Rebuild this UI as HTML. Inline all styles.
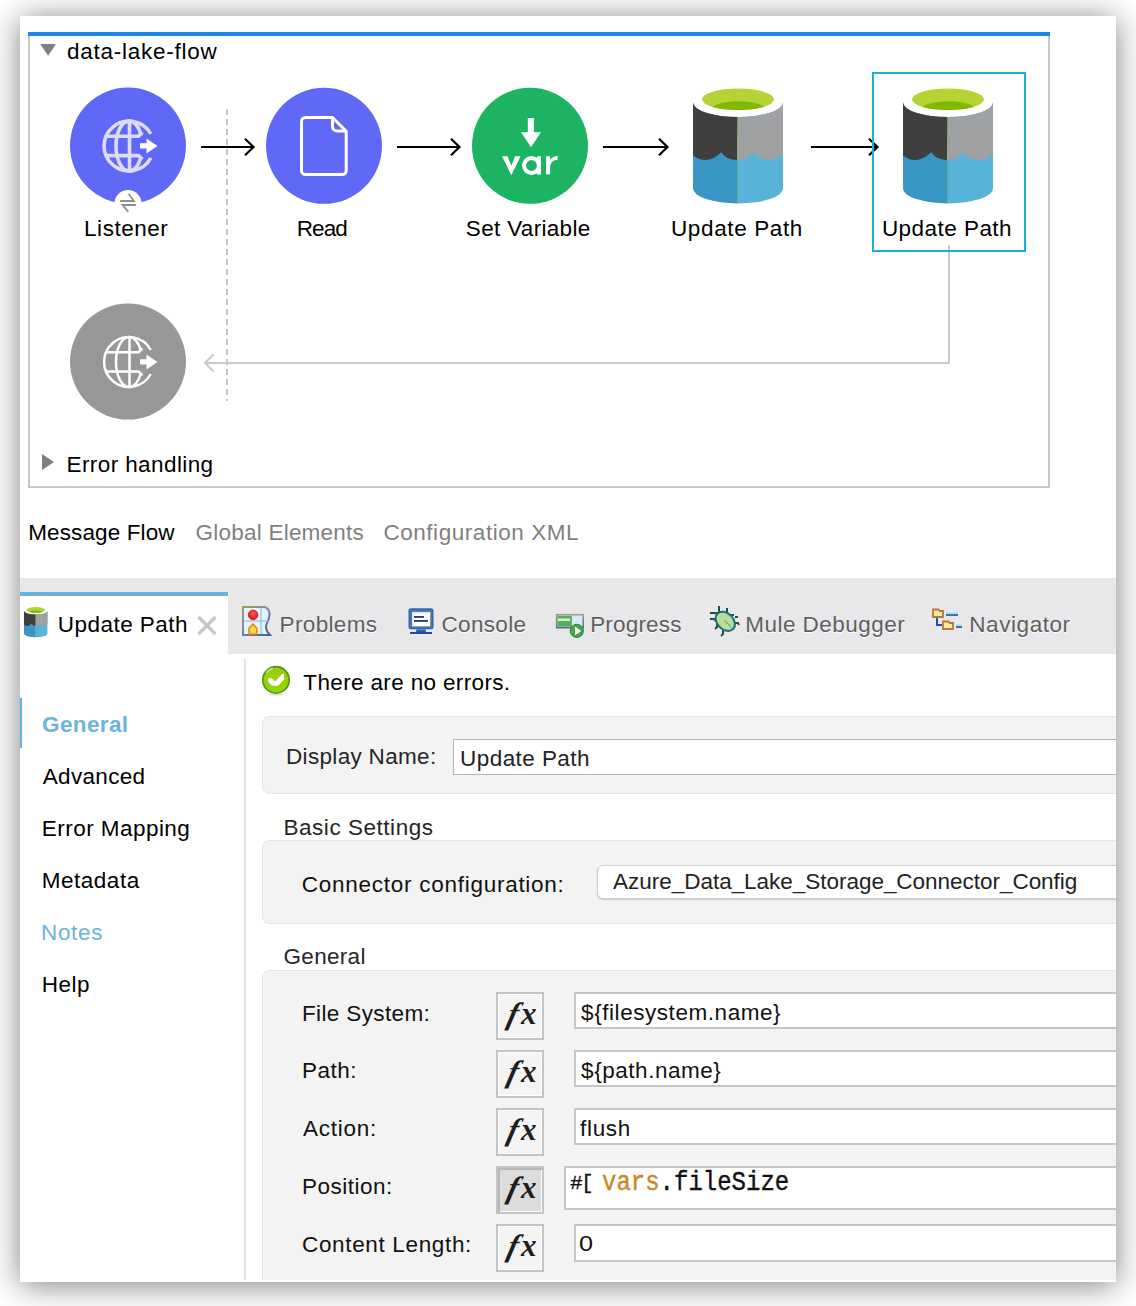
<!DOCTYPE html>
<html><head><meta charset="utf-8">
<style>
html,body{margin:0;padding:0;background:#fff;}
body{width:1136px;height:1306px;position:relative;overflow:hidden;font-family:"Liberation Sans",sans-serif;}
#win{position:absolute;left:20px;top:16px;width:1096px;height:1266px;background:#fff;box-shadow:0 3px 30px rgba(0,0,0,0.5);overflow:hidden;}
#c{position:absolute;left:-20px;top:-16px;width:1136px;height:1306px;}
.a{position:absolute;}
.t{position:absolute;white-space:nowrap;font-size:22.5px;line-height:22px;color:#000;}
svg{position:absolute;overflow:visible;}
.mono{font-family:"Liberation Mono",monospace;color:#111;transform:scaleY(1.15);transform-origin:0 17px;-webkit-text-stroke:0.35px #111;}
.tb{color:#5f5f60;text-shadow:0 1px 0 #fff;}
.fx{position:absolute;left:496px;width:48px;height:48px;box-sizing:border-box;border:2px solid #c4c4c4;background:#f4f4f4;box-shadow:inset 0 0 0 1px #fff;}
.fx i{position:absolute;top:4.5px;font-family:"Liberation Serif",serif;font-style:italic;font-weight:bold;line-height:30px;color:#1e1e1e;}
.fx .ff{left:8px;font-size:31px;transform:skewX(-14deg);transform-origin:0 24px;}
.fx .fxx{left:23px;font-size:31px;}
.fx.pressed{background:#dcdcdc;box-shadow:inset 2px 2px 0 #b8b8b8, inset -1px -1px 0 #fff;}
.inp{position:absolute;left:574px;width:700px;box-sizing:border-box;border:2px solid #c6c6c6;background:#fff;}
</style></head><body>
<div id="win"><div id="c">
  <!-- flow container -->
  <div class="a" style="left:28px;top:32px;width:1022px;height:4px;background:#1a88e6"></div>
  <div class="a" style="left:28px;top:36px;width:2px;height:452px;background:#c8c8cc"></div>
  <div class="a" style="left:1048px;top:36px;width:2px;height:452px;background:#c8c8cc"></div>
  <div class="a" style="left:28px;top:486px;width:1022px;height:2px;background:#c8c8cc"></div>

  <!-- DIAGRAM -->
    <svg class="a" style="left:0;top:0" width="1136" height="500" viewBox="0 0 1136 500">
    <defs>
      <clipPath id="cyl">
        <path d="M8,22.5 L8,108.5 A45,15 0 0 0 98,108.5 L98,22.5 A45,14.5 0 0 1 8,22.5 Z"/>
      </clipPath>
      <clipPath id="grn"><ellipse cx="53" cy="19.3" rx="36" ry="10.8"/></clipPath>
      <g id="lake">
        <g clip-path="url(#cyl)">
          <rect x="0" y="0" width="53" height="130" fill="#3a96c5"/>
          <rect x="53" y="0" width="60" height="130" fill="#59b3d9"/>
          <path d="M0,0 H53 V80 Q42,80.5 36.3,72.2 Q20,88 4,72 L0,72 Z" fill="#3f3f40"/>
          <path d="M53,0 H110 V72 H100 Q84,88 68.2,72.4 Q62.5,80.5 52,80 Z" fill="#a0a1a3"/>
          <rect x="52.3" y="36" width="0.8" height="90" fill="#8cc06a" opacity="0.7"/>
        </g>
        <ellipse cx="53" cy="19.3" rx="36" ry="10.8" fill="#b5d335"/>
        <g clip-path="url(#grn)"><ellipse cx="53.5" cy="30.5" rx="28.5" ry="9.3" fill="#7fba00"/></g>
      </g>
    </defs>

    <!-- header -->
    <path d="M40.2,44 L56,44 L48.1,55.7 Z" fill="#7f7f7f"/>
    <!-- error handling triangle -->
    <path d="M42,454 L54,462 L42,470 Z" fill="#7f7f7f"/>

    <!-- dashed line -->
    <line x1="227" y1="109" x2="227" y2="401" stroke="#c8c8c8" stroke-width="2" stroke-dasharray="6 4"/>

    <!-- return path -->
    <polyline points="949,245 949,363 205,363" fill="none" stroke="#c9c9c9" stroke-width="2"/>
    <polyline points="213.5,354.5 205,363 213.5,371.5" fill="none" stroke="#c9c9c9" stroke-width="2"/>

    <!-- arrows -->
    <g stroke="#000" stroke-width="2.2" fill="none">
      <line x1="201" y1="147" x2="253" y2="147"/><polyline points="245,138.8 253.5,147 245,155.2"/>
      <line x1="397" y1="147" x2="459" y2="147"/><polyline points="451,138.8 459.5,147 451,155.2"/>
      <line x1="603" y1="147" x2="667" y2="147"/><polyline points="659,138.8 667.5,147 659,155.2"/>
      <line x1="811" y1="147" x2="877" y2="147"/><polyline points="869,138.8 877.5,147 869,155.2"/>
    </g>

    <!-- Listener -->
    <circle cx="128" cy="145.6" r="58" fill="#6068f7"/>
    <g stroke="#dcdcf8" stroke-width="3.6" fill="none">
      <path d="M150.8,134 A24.9,24.9 0 1 0 150.8,158"/>
      <path d="M129,121.1 A13,24.9 0 0 0 129,170.9"/>
      <path d="M129,121.1 A13,24.9 0 0 1 141,135"/>
      <path d="M141,157 A13,24.9 0 0 1 129,170.9"/>
      <line x1="129.5" y1="121" x2="129.5" y2="171"/>
      <path d="M105,136.2 H138.5 L142.5,132.5"/>
      <path d="M105,155.6 H138.5 L142.5,159.3"/>
    </g>
    <path d="M140,143.3 H146.5 V138.5 L157.5,146 L146.5,153.5 V148.6 H140 Z" fill="#fff"/>
    <circle cx="128" cy="203.6" r="13.6" fill="#fff"/>
    <g stroke="#8f8f8f" stroke-width="1.8" fill="none">
      <polyline points="120.1,201 134,201 128.6,194"/>
      <polyline points="135.8,205 122.6,205 128.3,211.8"/>
    </g>


    <!-- gray globe -->
    <circle cx="128" cy="361.6" r="58" fill="#979797"/>
    <g transform="translate(0,216)">
    <g stroke="#fff" stroke-width="2.5" fill="none">
      <path d="M150.8,134 A24.9,24.9 0 1 0 150.8,158"/>
      <path d="M129,121.1 A13,24.9 0 0 0 129,170.9"/>
      <path d="M129,121.1 A13,24.9 0 0 1 141,135"/>
      <path d="M141,157 A13,24.9 0 0 1 129,170.9"/>
      <line x1="129.5" y1="121" x2="129.5" y2="171"/>
      <path d="M105,136.2 H138.5 L142.5,132.5"/>
      <path d="M105,155.6 H138.5 L142.5,159.3"/>
    </g>
    <path d="M140,143.3 H146.5 V138.5 L157.5,146 L146.5,153.5 V148.6 H140 Z" fill="#fff"/>
    </g>
    <!-- Read -->
    <circle cx="324" cy="145.8" r="58" fill="#6068f7"/>
    <path d="M305.5,117.5 H332.5 L346.2,131.2 V170.5 A4,4 0 0 1 342.2,174.5 H305.5 A4,4 0 0 1 301.5,170.5 V121.5 A4,4 0 0 1 305.5,117.5 Z" fill="none" stroke="#fff" stroke-width="3" stroke-linejoin="round"/>
    <path d="M332.5,117.5 V126.5 A4.5,4.5 0 0 0 337,131 H346.2" fill="none" stroke="#fff" stroke-width="3"/>

    <!-- Set Variable -->
    <circle cx="530" cy="145.8" r="58" fill="#1cb363"/>
    <rect x="527.8" y="118" width="6.1" height="15" fill="#fff"/>
    <path d="M521,132.3 H541 L531,147.2 Z" fill="#fff"/>
    <path d="M502.1,156.2 H507.6 L511.3,165.8 L515.1,156.2 H520.6 L511.3,175.3 Z" fill="#fff"/>
    <circle cx="531.5" cy="165.5" r="7.4" fill="none" stroke="#fff" stroke-width="4"/>
    <rect x="537" y="156.3" width="4" height="18.3" fill="#fff"/>
    <rect x="546.1" y="156.3" width="4" height="18.1" fill="#fff"/>
    <path d="M549,163.5 Q550,155.9 558,156 L557.3,160.1 Q551.6,160 550.1,166 Z" fill="#fff"/>

    <!-- Update Path 1 & 2 -->
    <use href="#lake" x="685" y="80"/>
    <use href="#lake" x="895" y="80"/>

    <!-- selection box -->
    <rect x="873" y="73" width="152" height="178" fill="none" stroke="#15b2d6" stroke-width="2"/>
  </svg>


  <!-- editor tabs -->
    <!-- editor tabs -->


  <!-- tab bar -->
  <div class="a" style="left:20px;top:578px;width:1096px;height:76px;background:#e8e8ea"></div>
  <div class="a" style="left:20px;top:592px;width:208px;height:62px;background:#fff"></div>
  <div class="a" style="left:20px;top:592px;width:208px;height:4px;background:#62b4e0"></div>
    <svg class="a" style="left:0;top:0" width="1136" height="700" viewBox="0 0 1136 700">
    <!-- active tab small lake -->
    <use href="#lake" transform="translate(21.8,604.8) scale(0.264)"/>
    <!-- close X -->
    <g stroke="#c6c6c6" stroke-width="3.2" stroke-linecap="butt">
      <line x1="198.5" y1="617" x2="215.5" y2="634"/><line x1="215.5" y1="617" x2="198.5" y2="634"/>
    </g>
    <!-- Problems icon -->
    <defs>
      <linearGradient id="pbord" x1="0" y1="0" x2="0.7" y2="1"><stop offset="0" stop-color="#a39a55"/><stop offset="0.45" stop-color="#8090a8"/><stop offset="1" stop-color="#4d6590"/></linearGradient>
      <radialGradient id="redg" cx="0.5" cy="0.35" r="0.6"><stop offset="0" stop-color="#ff5a5a"/><stop offset="1" stop-color="#d01818"/></radialGradient>
      <linearGradient id="chk" x1="0" y1="0" x2="0" y2="1"><stop offset="0" stop-color="#a8dc3c"/><stop offset="1" stop-color="#58a818"/></linearGradient>
    </defs>
    <path d="M243,607 H264.5 Q269.5,608.5 269.5,614 Q269.5,619 267,623 Q264,629 270,635 H243 Z" fill="#e4f2fb" stroke="url(#pbord)" stroke-width="2"/>
    <line x1="261" y1="608" x2="261" y2="634" stroke="#a9c0e2" stroke-width="1.4"/>
    <line x1="244" y1="621" x2="268" y2="621" stroke="#a9c0e2" stroke-width="1.4"/>
    <circle cx="253.1" cy="614.9" r="4.8" fill="url(#redg)" stroke="#d01010" stroke-width="0.8"/>
    <path d="M249,634 V628.2 L252.8,624.2 L256.8,628.2 V634 Z" fill="#ffd84a" stroke="#e88a10" stroke-width="1.6"/>
    <!-- Console icon -->
    <rect x="408.5" y="608.3" width="25" height="21" rx="2.5" fill="#2a68bc"/>
    <rect x="410.3" y="610.2" width="21.5" height="17.5" fill="#6a7591"/>
    <rect x="412" y="612" width="18.2" height="14.3" fill="#fff"/>
    <rect x="412" y="612" width="18.2" height="1.6" fill="#c8f0ff"/>
    <rect x="412" y="612" width="1.6" height="14.3" fill="#c8f0ff"/>
    <rect x="414" y="616" width="10" height="1.9" fill="#2d3c82"/>
    <rect x="414" y="620" width="14" height="1.9" fill="#2d3c82"/>
    <rect x="416.2" y="629.5" width="9.6" height="2.8" fill="#2d5c9c"/>
    <rect x="410" y="632" width="22" height="2" fill="#1f4f94"/>
    <!-- Progress icon -->
    <defs><linearGradient id="prb" x1="0" y1="0" x2="0" y2="1"><stop offset="0" stop-color="#aa9c88"/><stop offset="1" stop-color="#566c92"/></linearGradient></defs>
    <rect x="556.7" y="614.7" width="26.5" height="13" fill="#d2ecf8" stroke="url(#prb)" stroke-width="1.6"/>
    <rect x="557.6" y="615.8" width="14.3" height="10.9" fill="#5aae58"/>
    <rect x="558" y="618.5" width="12" height="2.4" fill="#eaf6e6" opacity="0.9"/>
    <circle cx="576.8" cy="630.9" r="6.6" fill="#4ba34c" stroke="#248a38" stroke-width="1"/>
    <path d="M575,626.6 L581.2,631 L575,635.2 Z" fill="#fff"/>
    <!-- Bug icon -->
    <g stroke="#234f3c" stroke-width="2" fill="none">
      <polyline points="719,606 719,613"/>
      <polyline points="710,613 720,613"/>
      <polyline points="727,608 727,614 725,616"/>
      <polyline points="730,615 734,615"/>
      <polyline points="735,617 738,617"/>
      <polyline points="710,619 714,619 716,621"/>
      <polyline points="717,621 717,627 715,629"/>
      <polyline points="734,623 738,623 739,625"/>
      <polyline points="723,628 723,634 721,636"/>
    </g>
    <ellipse cx="725.3" cy="621.3" rx="11" ry="8" transform="rotate(45 725.3 621.3)" fill="#b9dca0" stroke="#1e6e80" stroke-width="2"/>
    <line x1="725" y1="621" x2="731" y2="627" stroke="#58a040" stroke-width="1.4" stroke-dasharray="1.5 1"/>
    <!-- Navigator icon -->
    <g stroke="#b27a3a" stroke-width="1.8" fill="#f9e8a2">
      <path d="M933,609.5 H938.5 L939.8,611 H943 V617 H933 Z"/>
      <path d="M943,621.5 H948.5 L949.8,623 H953 V629 H943 Z"/>
    </g>
    <rect x="946" y="612" width="12" height="2" fill="#a2e8ff"/><rect x="946" y="614" width="12" height="2" fill="#4a6ea8"/>
    <rect x="956" y="624" width="6" height="2" fill="#a2e8ff"/><rect x="956" y="626" width="6" height="2" fill="#4a6ea8"/>
    <path d="M937,618 V625 H942" fill="none" stroke="#2050a8" stroke-width="2"/>
  </svg>


  <!-- left nav divider -->
  <div class="a" style="left:244px;top:659px;width:2px;height:640px;background:#e2e2e6"></div>
  <div class="a" style="left:20px;top:698px;width:2px;height:50px;background:#62b4e0"></div>


  <!-- panels -->
  <div class="a" style="left:262px;top:716px;width:900px;height:78px;background:#f3f3f3;border:1px solid #e6e6e6;border-radius:7px;box-sizing:border-box"></div>
  <div class="a" style="left:262px;top:840px;width:900px;height:84px;background:#f3f3f3;border:1px solid #e6e6e6;border-radius:7px;box-sizing:border-box"></div>
  <div class="a" style="left:262px;top:970px;width:900px;height:400px;background:#f3f3f3;border:1px solid #e6e6e6;border-radius:7px;box-sizing:border-box"></div>
    <svg class="a" style="left:0;top:0" width="1136" height="1306" viewBox="0 0 1136 1306">
    <ellipse cx="276" cy="694.3" rx="8" ry="1.3" fill="#000" opacity="0.13"/>
    <circle cx="276" cy="679.9" r="13.2" fill="url(#chk2)" stroke="#4f9812" stroke-width="1.7"/>
    <defs><linearGradient id="chk2" x1="0" y1="0" x2="0" y2="1"><stop offset="0" stop-color="#9ccc10"/><stop offset="1" stop-color="#92d600"/></linearGradient></defs>
    <path d="M266.5,673 Q268.5,669 273,668.2" fill="none" stroke="#d8f0a0" stroke-width="1.6" opacity="0.8"/>
    <polygon points="268.1,678.2 271.9,678.2 275,681.6 282.1,674 284,674 284,679.7 278,685.8 271.9,685.8 268.1,681.6" fill="#fff"/>
  </svg>

  <div class="a" style="left:453px;top:739px;width:700px;height:36px;background:#fff;border:1px solid #b2b2b2;box-sizing:border-box"></div>

  <div class="a" style="left:597px;top:865px;width:600px;height:34px;background:#fff;border:1px solid #cfcfcf;border-radius:6px;box-shadow:0 1px 1.5px rgba(0,0,0,0.18);box-sizing:border-box"></div>



  <div class="fx" style="top:992px"><i class="ff">f</i><i class="fxx">x</i></div>
  <div class="fx" style="top:1050px"><i class="ff">f</i><i class="fxx">x</i></div>
  <div class="fx" style="top:1108px"><i class="ff">f</i><i class="fxx">x</i></div>
  <div class="fx pressed" style="top:1166px"><i class="ff">f</i><i class="fxx">x</i></div>
  <div class="fx" style="top:1224px"><i class="ff">f</i><i class="fxx">x</i></div>

  <div class="inp" style="top:992px;height:37px"></div>
  <div class="inp" style="top:1050px;height:37px"></div>
  <div class="inp" style="top:1108px;height:37px"></div>
  <div class="inp" style="left:564px;top:1166px;height:44px"></div>
  <div class="inp" style="top:1224px;height:38px"></div>

  <div class="t mono" style="left:570px;top:1173px;font-size:21px;transform:none;letter-spacing:-1.5px">#[</div>
  <div class="t mono" style="left:602px;top:1173px;font-size:24px;color:#c88a1c;-webkit-text-stroke:0.35px #c88a1c">vars<span style="color:#111;-webkit-text-stroke:0.35px #111">.fileSize</span></div>
  <div class="t" style="left:579px;top:1233px;color:#111;transform:scaleX(1.12);transform-origin:0 0">0</div>


<!--TEXT-->
<div class="t" style="left:67px;top:41.4px;letter-spacing:0.738px">data-lake-flow</div>
<div class="t" style="left:84.1px;top:217.9px;letter-spacing:0.514px">Listener</div>
<div class="t" style="left:296.7px;top:217.9px;letter-spacing:-0.9px">Read</div>
<div class="t" style="left:465.8px;top:217.9px;letter-spacing:0.327px">Set Variable</div>
<div class="t" style="left:671px;top:217.9px;letter-spacing:0.62px">Update Path</div>
<div class="t" style="left:881.9px;top:217.9px;letter-spacing:0.46px">Update Path</div>
<div class="t" style="left:66.5px;top:453.9px;letter-spacing:0.408px">Error handling</div>
<div class="t" style="left:28.2px;top:521.6px;letter-spacing:0.118px">Message Flow</div>
<div class="t" style="left:195.6px;top:521.6px;letter-spacing:0.221px;color:#7f7f7f">Global Elements</div>
<div class="t" style="left:383.4px;top:521.6px;letter-spacing:0.55px;color:#7f7f7f">Configuration XML</div>
<div class="t" style="left:57.7px;top:614.3px;letter-spacing:0.48px">Update Path</div>
<div class="t tb" style="left:279.6px;top:614px;letter-spacing:0.343px;color:#5f5f60">Problems</div>
<div class="t tb" style="left:441.5px;top:614px;letter-spacing:0.333px;color:#5f5f60">Console</div>
<div class="t tb" style="left:590.2px;top:614px;letter-spacing:0.171px;color:#5f5f60">Progress</div>
<div class="t tb" style="left:745.2px;top:614px;letter-spacing:0.483px;color:#5f5f60">Mule Debugger</div>
<div class="t tb" style="left:969.3px;top:614px;letter-spacing:0.562px;color:#5f5f60">Navigator</div>
<div class="t" style="left:42px;top:713.9px;letter-spacing:0.383px;font-weight:bold;color:#6cb3de">General</div>
<div class="t" style="left:42.8px;top:765.9px;letter-spacing:0.314px">Advanced</div>
<div class="t" style="left:41.8px;top:818.1px;letter-spacing:0.458px">Error Mapping</div>
<div class="t" style="left:41.7px;top:870px;letter-spacing:0.529px">Metadata</div>
<div class="t" style="left:41px;top:922px;letter-spacing:0.65px;color:#6cb3de">Notes</div>
<div class="t" style="left:41.7px;top:974px;letter-spacing:0.5px">Help</div>
<div class="t" style="left:303.3px;top:672px;letter-spacing:0.353px">There are no errors.</div>
<div class="t" style="left:286px;top:746.4px;letter-spacing:0.325px;color:#262626">Display Name:</div>
<div class="t" style="left:460.1px;top:748.1px;letter-spacing:0.43px;color:#222">Update Path</div>
<div class="t" style="left:283.5px;top:816.5px;letter-spacing:0.531px;color:#262626">Basic Settings</div>
<div class="t" style="left:301.8px;top:873.9px;letter-spacing:0.735px;color:#111">Connector configuration:</div>
<div class="t" style="left:613.1px;top:871.3px;letter-spacing:-0.028px;color:#222">Azure_Data_Lake_Storage_Connector_Config</div>
<div class="t" style="left:283.5px;top:946px;letter-spacing:0.317px;color:#262626">General</div>
<div class="t" style="left:302px;top:1002.5px;letter-spacing:0.364px;color:#111">File System:</div>
<div class="t" style="left:302px;top:1060px;letter-spacing:0.5px;color:#111">Path:</div>
<div class="t" style="left:303px;top:1118px;letter-spacing:0.733px;color:#111">Action:</div>
<div class="t" style="left:302px;top:1176px;letter-spacing:0.5px;color:#111">Position:</div>
<div class="t" style="left:302px;top:1234px;letter-spacing:0.657px;color:#111">Content Length:</div>
<div class="t" style="left:581.1px;top:1001.6px;letter-spacing:0.553px;color:#111">${filesystem.name}</div>
<div class="t" style="left:581.1px;top:1059.9px;letter-spacing:0.536px;color:#111">${path.name}</div>
<div class="t" style="left:580.1px;top:1118.3px;letter-spacing:0.65px;color:#111">flush</div>
<!--/TEXT-->
  <div class="a" style="left:0;top:1280px;width:1136px;height:2px;background:#fff"></div>
</div></div>
</body></html>
